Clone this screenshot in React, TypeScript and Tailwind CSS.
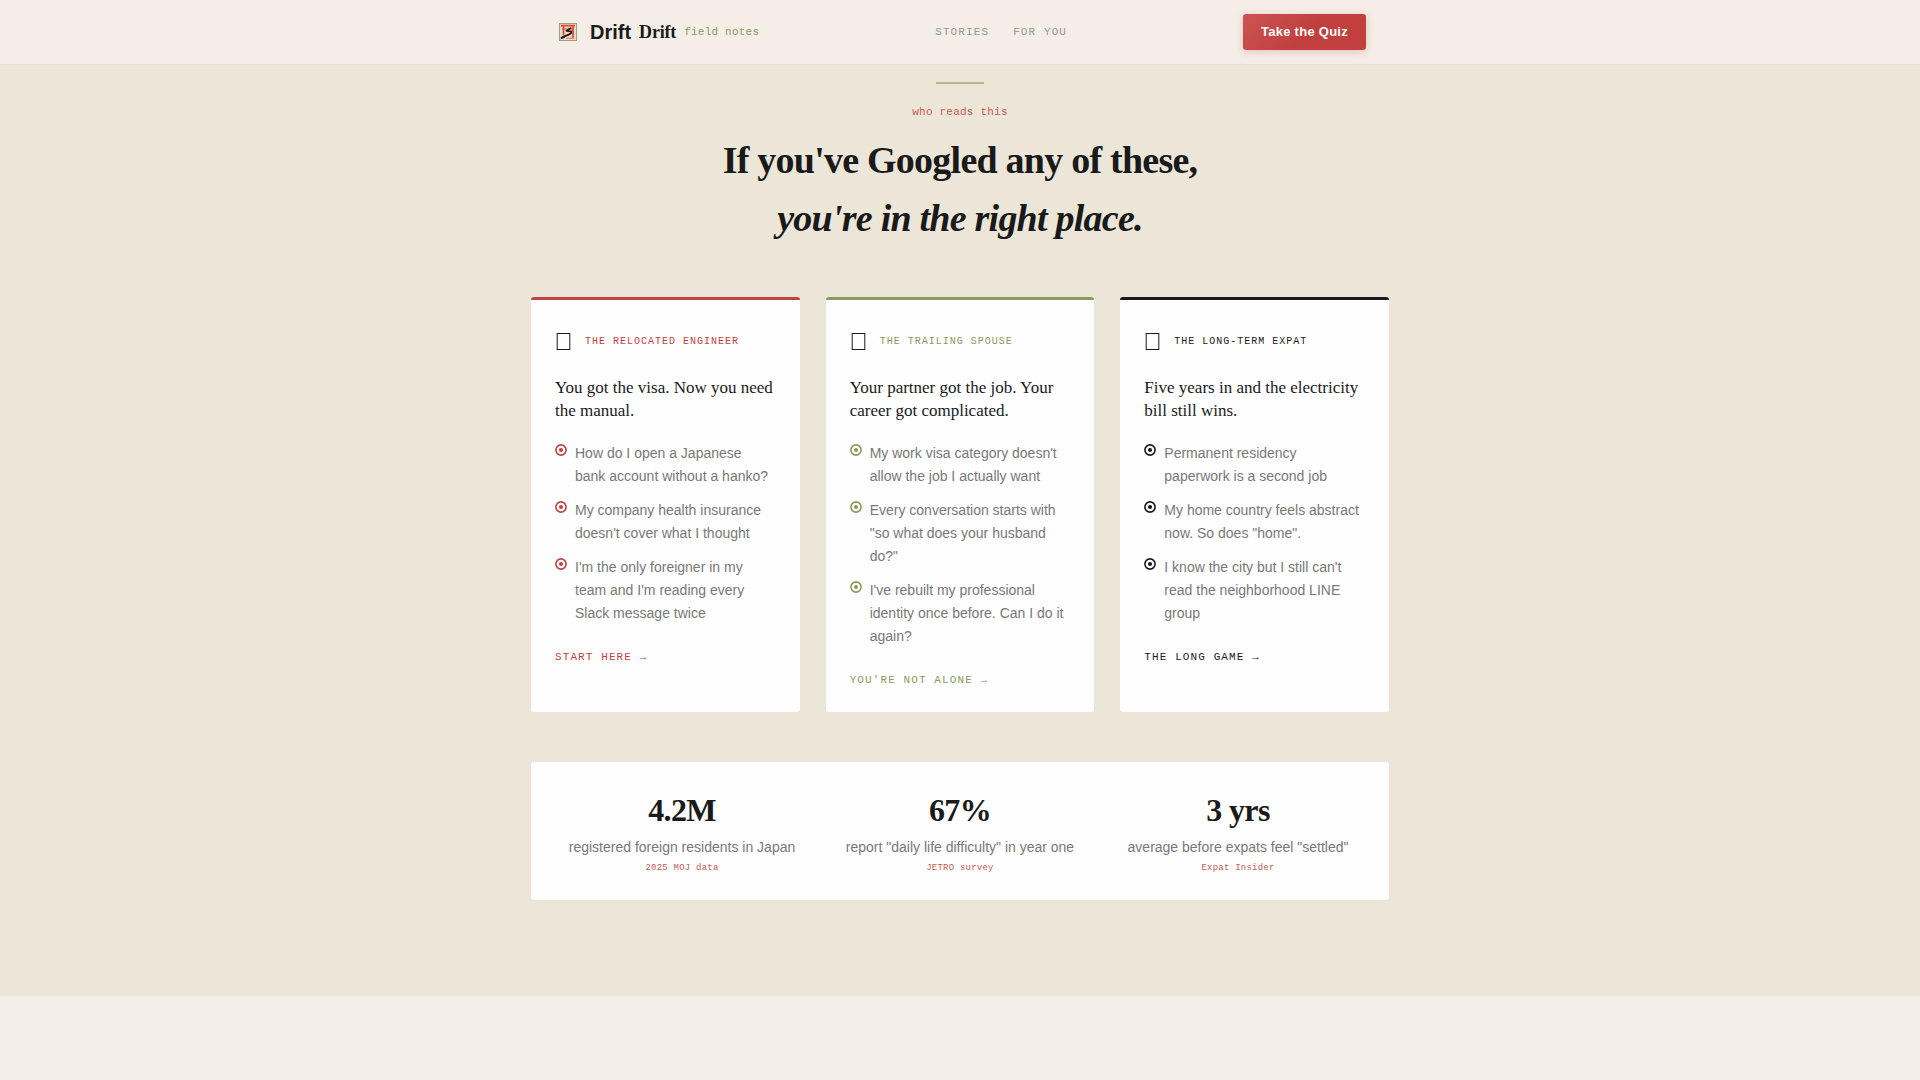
import { clsx } from 'clsx';

type Tone = 'red' | 'moss' | 'ink';

const toneText: Record<Tone, string> = {
  red: 'text-[#bf4342]',
  moss: 'text-[#8a9a5b]',
  ink: 'text-[#1a1a1a]',
};

const toneBorder: Record<Tone, string> = {
  red: 'border-t-[#bf4342]',
  moss: 'border-t-[#8a9a5b]',
  ink: 'border-t-[#1a1a1a]',
};

const personas: { tone: Tone; label: string; title: string; points: string[]; cta: string }[] = [
  {
    tone: 'red',
    label: 'The Relocated Engineer',
    title: 'You got the visa. Now you need the manual.',
    points: [
      'How do I open a Japanese bank account without a hanko?',
      "My company health insurance doesn't cover what I thought",
      "I'm the only foreigner in my team and I'm reading every Slack message twice",
    ],
    cta: 'Start here →',
  },
  {
    tone: 'moss',
    label: 'The Trailing Spouse',
    title: 'Your partner got the job. Your career got complicated.',
    points: [
      "My work visa category doesn't allow the job I actually want",
      'Every conversation starts with "so what does your husband do?"',
      "I've rebuilt my professional identity once before. Can I do it again?",
    ],
    cta: "You're not alone →",
  },
  {
    tone: 'ink',
    label: 'The Long-Term Expat',
    title: 'Five years in and the electricity bill still wins.',
    points: [
      'Permanent residency paperwork is a second job',
      'My home country feels abstract now. So does "home".',
      "I know the city but I still can't read the neighborhood LINE group",
    ],
    cta: 'The long game →',
  },
];

const stats = [
  { value: '4.2M', label: 'registered foreign residents in Japan', source: '2025 MOJ data' },
  { value: '67%', label: 'report "daily life difficulty" in year one', source: 'JETRO survey' },
  { value: '3 yrs', label: 'average before expats feel "settled"', source: 'Expat Insider' },
];

function Logo() {
  return (
    <svg viewBox="0 0 28 28" className="h-7 w-7" aria-hidden="true">
      <rect x="5.5" y="5.5" width="17" height="17" fill="#ecd9c4" stroke="#9a9f84" />
      <path d="M7 7.600h14" stroke="#d9483b" strokeWidth="1.800" />
      <path d="M8 11h12" stroke="#e0705c" strokeWidth="1.200" />
      <path d="M9.500 8v9M19 8v13" stroke="#d9483b" strokeWidth="1.700" />
      <path d="M12 20.300h8" stroke="#e08a70" strokeWidth="1.400" />
      <path
        d="M16.500 10.200l-4 2.600 4.500.6c.8.500.2 1.800-1 2.500-2.500 1.500-5 1.600-8.500 4"
        fill="none"
        stroke="#20201e"
        strokeWidth="1.900"
        strokeLinecap="round"
        strokeLinejoin="round"
      />
      <path d="M6.800 21.200c.4-2 2.500-3.600 5-4l-.8 2.400z" fill="#20201e" />
    </svg>
  );
}

function Header() {
  return (
    <header className="border-b border-[#e6dfd2] bg-[#f5eee7]">
      <div className="mx-auto flex h-16 max-w-[812px] items-center justify-between">
        <a href="#" className="flex items-center gap-2">
          <Logo />
          <span className="font-['Liberation_Sans',sans-serif] text-[20px] font-bold">Drift</span>
          <span className="font-['Liberation_Serif',serif] text-[18px] font-bold tracking-[-0.01em]">Drift</span>
          <span className="font-['Liberation_Mono',monospace] text-[11px] tracking-[0.02em] text-[#8a9a5b]">
            field notes
          </span>
        </a>
        <nav className="flex gap-6 font-['Liberation_Mono',monospace] text-[11px] tracking-widest text-[#9a9691] uppercase">
          <a href="#stories">Stories</a>
          <a href="#for-you">For You</a>
        </nav>
        <button
          type="button"
          className="h-9 rounded-[3px] bg-linear-135 from-[#cb5452] to-[#c1403e] to-50% px-[18px] text-[13px] font-bold tracking-[0.02em] text-white shadow-[0_2px_8px_rgba(191,67,66,0.25)]"
        >
          Take the Quiz
        </button>
      </div>
    </header>
  );
}

function Bullet() {
  return (
    <svg viewBox="0 0 12 12" className="mt-0.5 h-3 w-3 shrink-0" aria-hidden="true">
      <circle cx="6" cy="6" r="5.100" fill="none" stroke="currentColor" strokeWidth="1.600" />
      <circle cx="6" cy="6" r="2.100" fill="currentColor" />
    </svg>
  );
}

export default function App() {
  return (
    <div className="min-h-screen bg-[#f4efe6] font-['Liberation_Sans',sans-serif] text-[#1a1a1a]">
      <Header />
      <section className="bg-[#ece6d9] pt-[17px] pb-24">
        <div className="mx-auto max-w-[858px]">
          <div className="mx-auto h-0.5 w-12 bg-[#bdb48f]" />
          <p className="mt-5 text-center font-['Liberation_Mono',monospace] text-[11px] leading-4 tracking-[0.02em] text-[#c85a54]">
            who reads this
          </p>
          <h2 className="mt-[11px] text-center font-['Liberation_Serif',serif] text-[38px] leading-[58px] font-bold tracking-[-0.02em]">
            If you've Googled any of these,
            <br />
            <em>you're in the right place.</em>
          </h2>

          <div className="mt-[50px] grid grid-cols-3 gap-[26px]">
            {personas.map((p) => (
              <article
                key={p.label}
                className={clsx('rounded-[3px] border-t-[3px] bg-[#fefefe] px-6 pt-7 pb-6', toneBorder[p.tone])}
              >
                <div className="flex items-center gap-[10px]">
                  <svg viewBox="0 0 20 26" className="h-[26px] w-5" aria-hidden="true">
                    <rect x="2.200" y="5.500" width="12.600" height="16" fill="none" stroke="#1a1a1a" />
                  </svg>
                  <span
                    className={clsx(
                      "font-['Liberation_Mono',monospace] text-[10px] tracking-widest uppercase",
                      toneText[p.tone],
                    )}
                  >
                    {p.label}
                  </span>
                </div>
                <h3 className="mt-[22px] font-['Liberation_Serif',serif] text-[17px] leading-[23px]">{p.title}</h3>
                <ul className="mt-5 space-y-[11px]">
                  {p.points.map((point) => (
                    <li key={point} className={clsx('flex gap-2', toneText[p.tone])}>
                      <Bullet />
                      <span className="text-[14px] leading-[23px] text-[#787878]">{point}</span>
                    </li>
                  ))}
                </ul>
                <a
                  href="#"
                  className={clsx(
                    "mt-6 block font-['Liberation_Mono',monospace] text-[11px] leading-4 tracking-widest uppercase",
                    toneText[p.tone],
                  )}
                >
                  {p.cta}
                </a>
              </article>
            ))}
          </div>

          <div className="mt-[50px] grid grid-cols-3 gap-6 rounded-[3px] bg-[#fefefe] p-6 text-center">
            {stats.map((s) => (
              <div key={s.label} className="space-y-px">
                <p className="font-['Liberation_Serif',serif] text-[32px] leading-12 font-bold tracking-[-0.02em]">
                  {s.value}
                </p>
                <p className="text-[14px] leading-6 text-[#787878]">{s.label}</p>
                <p className="font-['Liberation_Mono',monospace] text-[9px] leading-4 tracking-wide text-[#c85a54]">
                  {s.source}
                </p>
              </div>
            ))}
          </div>
        </div>
      </section>
    </div>
  );
}
